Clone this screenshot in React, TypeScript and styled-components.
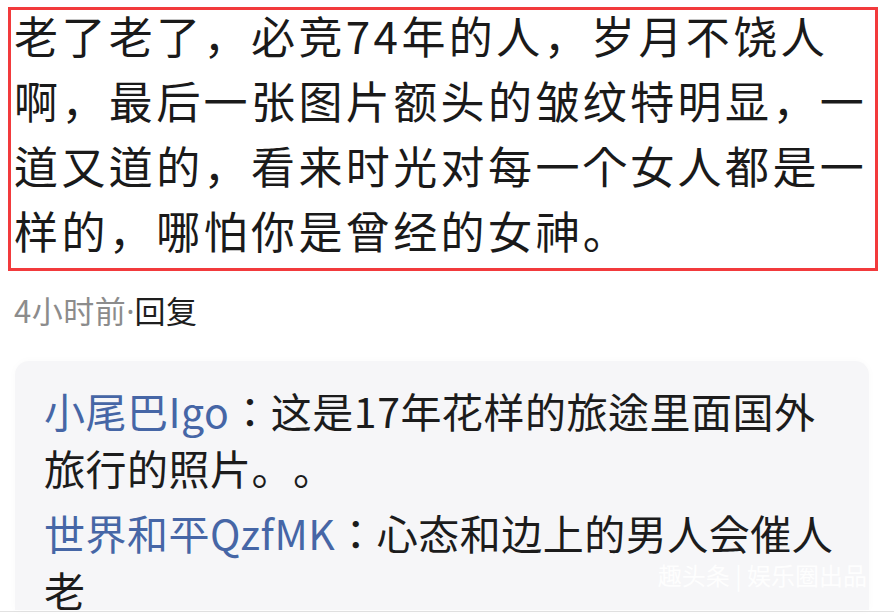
import React from 'react'
import styled, { createGlobalStyle } from 'styled-components'

const GlobalStyle = createGlobalStyle`
  html, body {
    margin: 0;
    padding: 0;
    background: #ffffff;
  }
  body {
    font-family: "Noto Sans CJK KR", "Noto Sans CJK SC", "Noto Sans", sans-serif;
    color: #1c1c1c;
    text-spacing-trim: space-all;
  }
`

const comments = [
  {
    name: '小尾巴Igo',
    lines: ['：这是17年花样的旅途里面国外', '旅行的照片。。'],
  },
  {
    name: '世界和平QzfMK',
    lines: ['：心态和边上的男人会催人', '老'],
  },
]

const App = () => {
  return (
    <>
      <GlobalStyle />
      <Page>
        <HighlightBox>
          <MainText>
            老了老了，必竞74年的人，岁月不饶人
            <br />
            啊，最后一张图片额头的皱纹特明显，一
            <br />
            道又道的，看来时光对每一个女人都是一
            <br />
            样的，哪怕你是曾经的女神。
          </MainText>
        </HighlightBox>

        <Meta>
          4小时前<Dot>·</Dot>
          <ReplyLink>回复</ReplyLink>
        </Meta>

        <ReplyCard>
          {comments.map(c => (
            <Comment key={c.name}>
              <UserName>{c.name}</UserName>
              {c.lines[0]}
              <br />
              {c.lines[1]}
            </Comment>
          ))}
          <Watermark>趣头条 | 娱乐圈出品</Watermark>
        </ReplyCard>
        <Divider />
      </Page>
    </>
  )
}

export default App

const Page = styled.div`
  width: 894px;
  height: 614px;
  overflow: hidden;
  display: flex;
  flex-direction: column;
`

const HighlightBox = styled.section`
  margin: 7px 16px 0 8px;
  border: 3px solid #f23a3c;
  padding: 0 4px 0 3px;
`

const MainText = styled.p`
  margin: -7px 0 5px;
  font-size: 44px;
  letter-spacing: 3.4px;
  line-height: 65px;
  white-space: nowrap;
  color: #1a1a1a;
`

const Meta = styled.div`
  margin: 19px 0 0 14px;
  font-size: 31px;
  line-height: 40px;
  letter-spacing: 0.5px;
  color: #8c8c8c;
`

const Dot = styled.span`
  font-family: "Noto Sans", sans-serif;
  letter-spacing: 0;
`

const ReplyLink = styled.span`
  color: #1e1e1e;
`

const ReplyCard = styled.div`
  position: relative;
  margin: 30px 25px 0 15px;
  height: 249px;
  padding: 21px 0 0 29px;
  box-sizing: border-box;
  background: #f6f6f8;
  border-radius: 14px 14px 0 0;
  box-shadow: 0 0 8px rgba(0, 0, 0, 0.025);
  overflow: hidden;
  display: flex;
  flex-direction: column;
  gap: 8px;
`

const Comment = styled.p`
  margin: 0;
  font-size: 41px;
  line-height: 57px;
  letter-spacing: 0.5px;
  white-space: nowrap;
  color: #1c1c1c;
`

const UserName = styled.span`
  color: #4666a6;
`

const Watermark = styled.span`
  position: absolute;
  right: 2px;
  bottom: 20px;
  font-size: 24px;
  line-height: 30px;
  color: rgba(255, 255, 255, 0.92);
  white-space: nowrap;
`

const Divider = styled.div`
  height: 1px;
  background: #e2e2e2;
  margin-top: 1px;
`
